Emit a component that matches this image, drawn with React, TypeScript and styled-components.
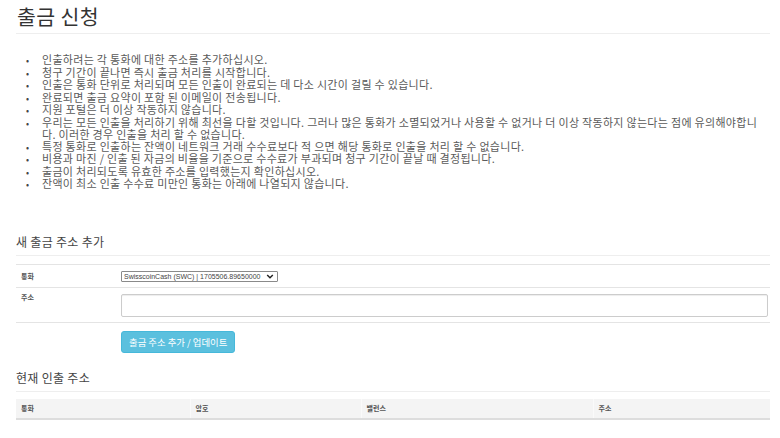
import React from 'react';
import styled, { createGlobalStyle } from 'styled-components';

const notices: string[] = [
  '인출하려는 각 통화에 대한 주소를 추가하십시오.',
  '청구 기간이 끝나면 즉시 출금 처리를 시작합니다.',
  '인출은 통화 단위로 처리되며 모든 인출이 완료되는 데 다소 시간이 걸릴 수 있습니다.',
  '완료되면 출금 요약이 포함 된 이메일이 전송됩니다.',
  '지원 포털은 더 이상 작동하지 않습니다.',
  '우리는 모든 인출을 처리하기 위해 최선을 다할 것입니다. 그러나 많은 통화가 소멸되었거나 사용할 수 없거나 더 이상 작동하지 않는다는 점에 유의해야합니다. 이러한 경우 인출을 처리 할 수 없습니다.',
  '특정 통화로 인출하는 잔액이 네트워크 거래 수수료보다 적 으면 해당 통화로 인출을 처리 할 수 없습니다.',
  '비용과 마진 / 인출 된 자금의 비율을 기준으로 수수료가 부과되며 청구 기간이 끝날 때 결정됩니다.',
  '출금이 처리되도록 유효한 주소를 입력했는지 확인하십시오.',
  '잔액이 최소 인출 수수료 미만인 통화는 아래에 나열되지 않습니다.',
];

const columns = [
  { label: '통화', width: 174 },
  { label: '암호', width: 171 },
  { label: '밸런스', width: 232 },
  { label: '주소', width: 177 },
];

const GlobalStyle = createGlobalStyle`
  body {
    margin: 0;
    background: #fff;
    color: #333;
    font-family: "Noto Sans CJK KR", "Noto Sans", sans-serif;
  }
`;

const App: React.FC = () => (
  <>
    <GlobalStyle />
    <Page>
      <PageTitle>출금 신청</PageTitle>
      <NoticeList>
        {notices.map((text) => (
          <Notice key={text}>{text}</Notice>
        ))}
      </NoticeList>

      <SectionTitle $gap={43}>새 출금 주소 추가</SectionTitle>
      <FormTable>
        <tbody>
          <FormRow>
            <LabelCell>통화</LabelCell>
            <FieldCell>
              <SelectWrap>
                <CurrencySelect defaultValue="swc">
                  <option value="swc">SwisscoinCash (SWC) | 1705506.89650000</option>
                </CurrencySelect>
                <SelectArrow viewBox="0 0 10 8" aria-hidden="true">
                  <path d="M1.5 2 L5 5.5 L8.5 2" fill="none" stroke="#222" strokeWidth="1.8" />
                </SelectArrow>
              </SelectWrap>
            </FieldCell>
          </FormRow>
          <FormRow>
            <LabelCell $top>주소</LabelCell>
            <FieldCell>
              <AddressInput type="text" />
            </FieldCell>
          </FormRow>
          <FormRow>
            <LabelCell />
            <FieldCell $pad={4}>
              <SubmitButton type="button">출금 주소 추가 / 업데이트</SubmitButton>
            </FieldCell>
          </FormRow>
        </tbody>
      </FormTable>

      <SectionTitle $gap={17}>현재 인출 주소</SectionTitle>
      <DataTable>
        <colgroup>
          {columns.map((c) => (
            <col key={c.label} style={{ width: c.width }} />
          ))}
        </colgroup>
        <thead>
          <tr>
            {columns.map((c) => (
              <HeadCell key={c.label}>{c.label}</HeadCell>
            ))}
          </tr>
        </thead>
      </DataTable>
    </Page>
  </>
);

const Page = styled.div`
  width: 754px;
  margin-left: 16px;
`;

const PageTitle = styled.h1`
  margin: 0;
  padding: 4px 0 5px 1px;
  font-size: 20.5px;
  line-height: 24px;
  font-weight: 400;
  letter-spacing: 0.4px;
  color: #333;
  border-bottom: 1px solid #eee;
`;

const NoticeList = styled.ul`
  margin: 20px 0 0;
  padding: 0 4px 0 10px;
  list-style: none;
  font-size: 11px;
  line-height: 11.5px;
  letter-spacing: 0.3px;
  color: #5a5a5a;
`;

const Notice = styled.li`
  padding-left: 16px;
  text-indent: -16px;

  &::before {
    content: '•';
    display: inline-block;
    width: 16px;
    text-indent: 0;
    font-size: 9px;
    color: #444;
  }
`;

const SectionTitle = styled.h3<{ $gap: number }>`
  margin: ${(p) => p.$gap}px 0 0;
  padding-bottom: 5px;
  font-size: 12px;
  line-height: 16px;
  font-weight: 400;
  letter-spacing: 0.3px;
  color: #444;
  border-bottom: 1px solid #eee;
`;

const FormTable = styled.table`
  width: 100%;
  margin-top: 8px;
  border-collapse: collapse;
`;

const FormRow = styled.tr`
  border-top: 1px solid #e4e4e4;
`;

const LabelCell = styled.td<{ $top?: boolean }>`
  width: 95px;
  padding: ${(p) => (p.$top ? '4px' : '0')} 5px 0;
  vertical-align: ${(p) => (p.$top ? 'top' : 'middle')};
  font-size: 7px;
  font-weight: 700;
  color: #555;
`;

const FieldCell = styled.td<{ $pad?: number }>`
  padding: ${(p) => p.$pad ?? 6}px 2px ${(p) => (p.$pad ? 0 : 5)}px 5px;
  vertical-align: top;
`;

const SelectWrap = styled.div`
  position: relative;
  width: 157px;
`;

const CurrencySelect = styled.select`
  display: block;
  box-sizing: border-box;
  width: 100%;
  height: 11px;
  padding: 0 0 0 2px;
  appearance: none;
  font-family: "Liberation Sans", Arial, sans-serif;
  font-size: 7px;
  line-height: 9px;
  color: #444;
  border: 1px solid #8a8a8a;
  border-radius: 1px;
  background: #fff;
`;

const SelectArrow = styled.svg`
  position: absolute;
  right: 4px;
  top: 2px;
  width: 8px;
  height: 7px;
  pointer-events: none;
`;

const AddressInput = styled.input`
  display: block;
  box-sizing: border-box;
  width: 647px;
  height: 23px;
  border: 1px solid #ccc;
  border-radius: 2px;
  box-shadow: inset 0 1px 1px rgba(0, 0, 0, 0.075);
`;

const SubmitButton = styled.button`
  height: 22px;
  padding: 0 7px;
  font-family: "Noto Sans CJK KR", sans-serif;
  font-size: 9.4px;
  color: #fff;
  background: #5bc0de;
  border: 1px solid #46b8da;
  border-radius: 3px;
`;

const DataTable = styled.table`
  width: 100%;
  margin-top: 7px;
  border-collapse: collapse;
  table-layout: fixed;
`;

const HeadCell = styled.th`
  height: 19px;
  padding: 0 5px;
  text-align: left;
  font-size: 7px;
  font-weight: 700;
  color: #555;
  background: #f4f4f4;
  border-bottom: 2px solid #ddd;
  border-left: 1px solid #fafafa;

  &:first-child {
    border-left: none;
  }
`;

export default App;
